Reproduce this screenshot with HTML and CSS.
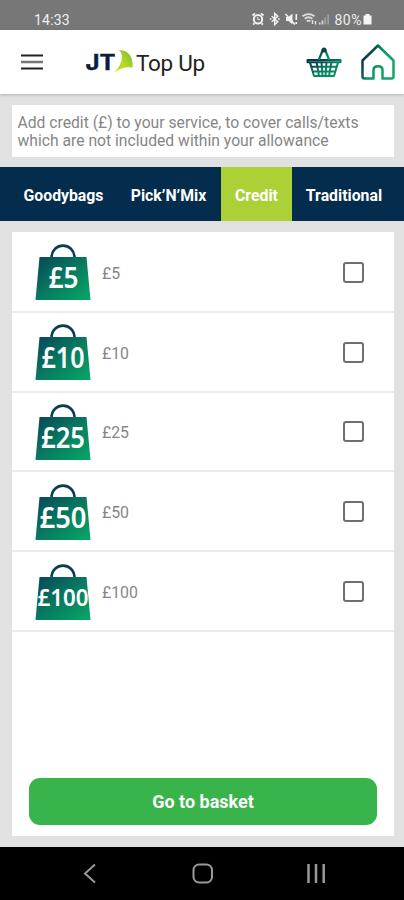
FILE: index.html
```html
<!DOCTYPE html>
<html lang="en">
<head>
    <meta charset="UTF-8">
    <meta name="viewport" content="width=device-width, initial-scale=1">
    <title>JT Top Up</title>
    <link rel="stylesheet" href="styles.css">
</head>
<body>
    <div class="status-bar">
        <span class="time">14:33</span>
        <div class="status-icons">
            <svg width="124" height="16" viewBox="0 0 124 16">
                <!-- alarm -->
                <g fill="none" stroke="#f2f2f2" stroke-width="2">
                    <circle cx="7" cy="8.3" r="4.2"/>
                    <path d="M1.5 4.5L4 2.3M12.5 4.5L10 2.3M3.5 12.3L2 13.5M10.5 12.3L12 13.5" stroke-width="1.7"/>
                    <path d="M6.8 6v2.6h2" stroke-width="1"/>
                </g>
                <!-- bluetooth -->
                <path d="M20.7 5.2l6 5.6-3 2.7V2.5l3 2.7-6 5.6M18.8 8h1.6M27 8h1.8" fill="none" stroke="#f2f2f2" stroke-width="1.5"/>
                <!-- muted -->
                <path d="M35 6h2.5L41.5 2.5v11L37.5 10H35z" fill="#f2f2f2"/>
                <path d="M34.5 3l9.5 10.5M45.3 3v6M45.3 11v2" stroke="#f2f2f2" stroke-width="1.6"/>
                <!-- wifi -->
                <g fill="none" stroke="#dedede" stroke-width="1.8">
                    <path d="M51.5 5.3q6-4.5 12 0M53.7 7.7q4-3 7.6 0M55.8 10.2q2-1.3 3.6 0"/>
                    <path d="M61.5 9v4M64.5 10v3.5" stroke-width="1.5"/>
                </g>
                <!-- signal -->
                <path d="M68.7 11.5v2M71.5 9.5v4" stroke="#d8d8d8" stroke-width="1.7"/>
                <path d="M74.2 6.5v7M77.2 3.5v10" stroke="#a0a0a0" stroke-width="1.7"/>
                <text class="battery-text" x="83.5" y="13.8" textLength="27">80%</text>
                <path d="M112.5 4.5h2V3h4v1.5h2v9h-8z" fill="#f5f5f5"/>
            </svg>
        </div>
    </div>

    <header class="header">
        <svg class="menu" width="22" height="16" viewBox="0 0 22 16">
            <path d="M0 1.5h22M0 14.5h22" stroke="#222" stroke-width="2"/>
            <path d="M0 8h22" stroke="#777" stroke-width="2.5"/>
        </svg>
        <div class="brand">
            <svg class="logo" width="50" height="26" viewBox="0 0 50 26">
                <defs>
                    <linearGradient id="leaf" x1="0" y1="1" x2="1" y2="0">
                        <stop offset="0" stop-color="#d3dd20"/>
                        <stop offset="0.5" stop-color="#b4d72b"/>
                        <stop offset="1" stop-color="#70b62c"/>
                    </linearGradient>
                </defs>
                <text class="logo-text" x="0.5" y="21" textLength="30" lengthAdjust="spacingAndGlyphs">JT</text>
                <path d="M34 1C42 1 49 7 47.5 18.5Q37 17 29 24Q35 17 36.5 11.5Q38 5 34 1z" fill="url(#leaf)"/>
            </svg>
            <span class="brand-name">Top Up</span>
        </div>
        <svg class="basket" width="36" height="32" viewBox="0 0 36 32">
            <defs>
                <linearGradient id="line" x1="0" y1="0" x2="1" y2="1">
                    <stop offset="0.2" stop-color="#063d4d"/>
                    <stop offset="0.5" stop-color="#087c60"/>
                    <stop offset="1" stop-color="#079c65"/>
                </linearGradient>
            </defs>
            <g fill="none" stroke="url(#line)" stroke-width="2" stroke-linejoin="round">
                <path d="M1.5 14h33v2.2h-33zM4 16.5l4 13.5h20l4-13.5M5.5 20.8h25M7 25.4h22M10.5 16l2.5 14M15.5 16l1 14M20.5 16l-1 14M25.5 16L23 30"/>
                <path d="M12.8 14L17 3.5h2l4.2 10.5" stroke-width="2.2"/>
            </g>
            <circle cx="18" cy="4" r="2.5" fill="#064650"/>
        </svg>
        <svg class="home" width="36" height="38" viewBox="0 0 36 38">
            <defs>
                <linearGradient id="house" x1="0" y1="0.2" x2="0.9" y2="0.7">
                    <stop offset="0" stop-color="#05283d"/>
                    <stop offset="0.3" stop-color="#075552"/>
                    <stop offset="0.5" stop-color="#069665"/>
                    <stop offset="1" stop-color="#14a568"/>
                </linearGradient>
            </defs>
            <path d="M18 2.5L2.5 17.5V33.5q0 2 2 2h9V27q0-3.8 4.5-3.8T22.5 27v8.5h9q2 0 2-2V17.5z" fill="none" stroke="url(#house)" stroke-width="2.5" stroke-linejoin="round"/>
        </svg>
    </header>

    <main class="content">
        <p class="note">Add credit (£) to your service, to cover calls/texts<br>which are not included within your allowance</p>

        <nav class="tabs">
            <a class="tab goodybags">Goodybags</a>
            <a class="tab pick">Pick’N’Mix</a>
            <a class="tab active">Credit</a>
            <a class="tab traditional">Traditional</a>
        </nav>

        <div class="card">
            <ul class="credit-list" id="credit-list"></ul>
            <button class="basket-button">Go to basket</button>
        </div>
    </main>

    <div class="nav-bar">
        <svg width="404" height="53" viewBox="0 0 404 53" fill="none" stroke="#999" stroke-width="2">
            <path d="M95 17.5L85 26.500l10 9"/>
            <rect x="193.5" y="17.5" width="18.5" height="18" rx="5.5"/>
            <path d="M308.5 17v19M316 17v19M323.700 17v19" stroke-width="2.5"/>
        </svg>
    </div>

    <script>
        const list = document.getElementById('credit-list');
        // amount, left edge, width, font size and baseline of the bag label
        const items = [
            ['5', 13.5, 30, 28, 44],
            ['10', 6.5, 43, 28, 44],
            ['25', 6, 44, 28, 44],
            ['50', 4.5, 47, 28, 44],
            ['100', 2.5, 51, 24, 42]
        ];

        items.forEach(([amount, x, width, size, y]) => {
            const li = document.createElement('li');
            li.className = 'credit-item';
            li.innerHTML = `
                <svg class="bag" width="57" height="57" viewBox="0 0 57 57">
                    <defs>
                        <linearGradient id="bag${amount}" x1="0" y1="0" x2="1" y2="1">
                            <stop offset="0" stop-color="#074659"/>
                            <stop offset="0.45" stop-color="#08755f"/>
                            <stop offset="1" stop-color="#08a866"/>
                        </linearGradient>
                    </defs>
                    <path d="M16.5 14C16.5-2.5 39.5-2.5 39.5 14" fill="none" stroke="#073f50" stroke-width="2.6"/>
                    <path d="M4.5 13h47L55.5 56H.5z" fill="url(#bag${amount})"/>
                    <text class="bag-text" x="${x}" y="${y}" font-size="${size}" textLength="${width}" lengthAdjust="spacingAndGlyphs">£${amount}</text>
                </svg>
                <span class="price">£${amount}</span>
                <input type="checkbox" class="check">`;
            list.appendChild(li);
        });
    </script>
</body>
</html>
```
FILE: styles.css
```css
* {
    box-sizing: border-box;
}

body {
    margin: 0;
    height: 900px;
    display: flex;
    flex-direction: column;
    overflow: hidden;
    font-family: Roboto, "Liberation Sans", sans-serif;
    background-color: #e1e1e1;
}

.status-bar {
    height: 30px;
    display: flex;
    justify-content: space-between;
    padding: 11px 29px 0 34px;
    background-color: #777;
    color: #f0f0f0;
}

.time {
    font-size: 14px;
    line-height: 19px;
    letter-spacing: 0.2px;
}

.battery-text {
    font-size: 14px;
    fill: #eee;
}

.header {
    height: 64px;
    display: flex;
    align-items: flex-start;
    background-color: #fff;
    box-shadow: 0 1px 3px rgba(0, 0, 0, 0.2);
}

.menu {
    margin: 24px 0 0 21px;
}

.brand {
    display: flex;
    margin: 19px 0 0 42px;
}

.logo-text {
    font-family: Inter, sans-serif;
    font-size: 21px;
    font-weight: 700;
    fill: #071e42;
    stroke: #071e42;
    stroke-width: 0.4px;
}

.brand-name {
    margin-left: 1px;
    font-size: 22.5px;
    line-height: 28px;
    letter-spacing: -0.3px;
    color: #222;
}

.basket {
    margin: 16px 0 0 auto;
}

.home {
    margin: 13px 8px 0 18px;
}

.content {
    flex: 1;
    display: flex;
    flex-direction: column;
}

.note {
    height: 52px;
    margin: 11px 10px 10px 12px;
    padding: 9px 5.5px;
    background-color: #fff;
    color: #868686;
    font-size: 15.7px;
    line-height: 18px;
    white-space: nowrap;
}

.tabs {
    height: 54px;
    display: flex;
    background-color: #032c4d;
    color: #fff;
    font-size: 15.8px;
    font-weight: 700;
    line-height: 57px;
    text-align: center;
}

.goodybags {
    width: 127px;
}

.pick {
    width: 94px;
    padding-right: 11px;
}

.active {
    width: 71px;
    background-color: #abd136;
}

.traditional {
    width: 104px;
}

.card {
    flex: 1;
    display: flex;
    flex-direction: column;
    justify-content: space-between;
    margin: 11px 10px 11px 12px;
    background-color: #fff;
}

.credit-list {
    list-style: none;
    margin: 0;
    padding: 1px 0 0;
}

.credit-item {
    height: 79.8px;
    display: flex;
    align-items: center;
    padding: 0 30px 0 23px;
    border-bottom: 2px solid #ebebeb;
}

.bag {
    margin-top: 2px;
}

.bag-text {
    font-family: "Noto Sans", sans-serif;
    font-weight: 600;
    fill: #fff;
}

.price {
    margin-left: 10px;
    margin-top: 3px;
    font-size: 15.8px;
    color: #868686;
}

.check {
    appearance: none;
    width: 21px;
    height: 21px;
    margin: 1px 0 0 auto;
    border: 2px solid #6f6f6f;
    border-radius: 3px;
}

.basket-button {
    height: 47px;
    margin: 0 17px 11.5px;
    padding-top: 1px;
    border: none;
    border-radius: 11px;
    background-color: #39b44b;
    color: #fff;
    font-family: inherit;
    font-size: 18px;
    font-weight: 700;
}

.nav-bar {
    height: 53px;
    background-color: #000;
}
```
